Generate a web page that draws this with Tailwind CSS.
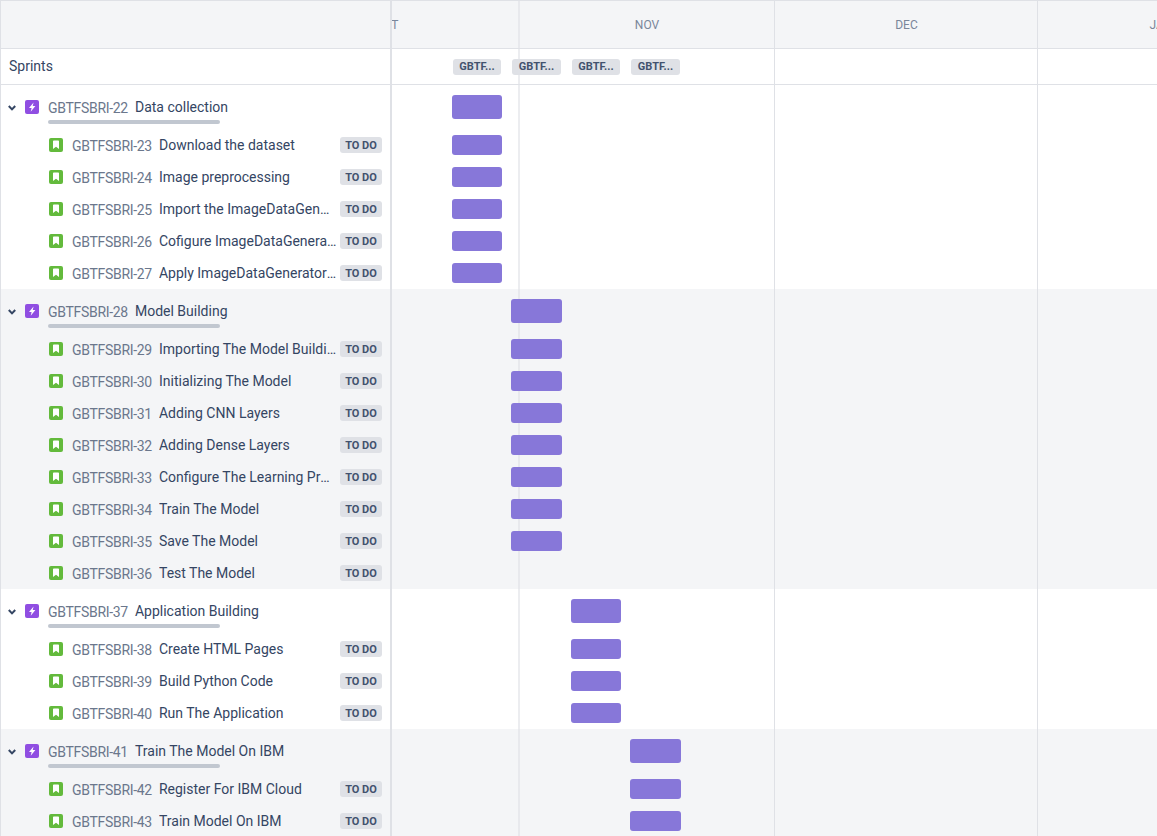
<!DOCTYPE html>
<html><head><meta charset="utf-8"><script src="https://cdn.jsdelivr.net/npm/@tailwindcss/browser@4"></script></head>
<body class="m-0 overflow-hidden bg-white">
<div class="relative h-[836px] w-[1157px] overflow-hidden font-['Roboto',sans-serif] text-[14px] text-[#344563]">

<div class="pointer-events-none absolute left-[518px] top-0 h-full w-[2px] bg-[#dfe1e6]/60"></div>
<div class="pointer-events-none absolute left-[774px] top-0 h-full w-px bg-[#dfe1e6]"></div>
<div class="pointer-events-none absolute left-[1037px] top-0 h-full w-px bg-[#dfe1e6]"></div>

<div class="flex h-[49px] border-y border-l border-[#dfe1e6] bg-[#f4f5f7]">
  <div class="w-[391px] shrink-0 border-r-2 border-[#dfe1e6]"></div>
  <div class="flex flex-1 overflow-hidden text-[12px] uppercase leading-[49px] text-[#7a869a]">
    <div class="ml-[-137px] w-[264px] shrink-0 text-center">Oct</div>
    <div class="w-[256px] shrink-0 text-center">Nov</div>
    <div class="w-[263px] shrink-0 text-center">Dec</div>
    <div class="w-[246px] shrink-0 text-center">Jan</div>
  </div>
</div>

<div class="flex h-[36px] border-b border-l border-[#dfe1e6]">
  <div class="flex w-[391px] shrink-0 items-center border-r-2 border-[#dfe1e6] pl-2">Sprints</div>
  <div class="relative z-10 flex flex-1 items-center gap-[11px] pl-[61px] text-[11px] font-bold text-[#42526e]">
    <span class="flex h-[16px] w-[48px] items-center justify-center rounded-[3px] bg-[#dfe1e6] pt-px">GBTF...</span>
    <span class="flex h-[16px] w-[49px] items-center justify-center rounded-[3px] bg-[#dfe1e6] pt-px">GBTF...</span>
    <span class="flex h-[16px] w-[48px] items-center justify-center rounded-[3px] bg-[#dfe1e6] pt-px">GBTF...</span>
    <span class="flex h-[16px] w-[49px] items-center justify-center rounded-[3px] bg-[#dfe1e6] pt-px">GBTF...</span>
  </div>
</div>

<!-- GROUP 1 -->
<div>
  <div class="flex h-[44px] border-l border-[#dfe1e6]">
    <div class="relative flex w-[391px] shrink-0 items-start border-r-2 border-[#dfe1e6] pt-[15px]">
      <svg class="ml-[7px] mt-[5px] h-[6px] w-[8px]" viewBox="0 0 8 6"><path d="M.8 1 4 4.4 7.2 1" fill="none" stroke="#344563" stroke-width="2"/></svg>
      <svg class="ml-[9px] h-[14px] w-[14px]" viewBox="0 0 14 14"><rect width="14" height="14" rx="2" fill="#904ee2"/><path d="M8.6 2.4 4 8h2.6l-.9 3.8L10.4 6H7.7z" fill="#fff"/></svg>
      <span class="ml-[9px] leading-[16px] tracking-[-0.3px] text-[#6b778c]">GBTFSBRI-22</span>
      <span class="ml-[7px] leading-[14px]">Data collection</span>
      <div class="absolute left-[47px] top-[35px] h-[4px] w-[172px] rounded-sm bg-[#c1c7d0]"></div>
    </div>
    <div class="flex-1 pl-[59.75px] pt-[10px]"><div class="relative z-10 h-[24px] w-[50.6px] rounded-[3px] bg-[#8777d9]"></div></div>
  </div>
  <div class="flex h-[32px] border-l border-[#dfe1e6]"><div class="flex w-[391px] shrink-0 items-center border-r-2 border-[#dfe1e6] pl-[48px]"><svg class="h-[14px] w-[14px] shrink-0" viewBox="0 0 14 14"><rect width="14" height="14" rx="2" fill="#63ba3c"/><path d="M4.8 2.5h4.4a.8.8 0 0 1 .8.8V11L7 8.8 4 11V3.3a.8.8 0 0 1 .8-.8z" fill="#fff"/></svg><span class="ml-[9px] shrink-0 pt-[2px] tracking-[-0.3px] text-[#6b778c]">GBTFSBRI-23</span><span class="ml-[7px] min-w-0 flex-1 truncate">Download the dataset</span><span class="ml-[3.5px] mr-[8px] flex h-[16px] w-[42px] shrink-0 items-center justify-center rounded-[3px] bg-[#dfe1e6] pt-[2px] text-[11px] font-bold text-[#42526e]">TO DO</span></div><div class="flex-1 pl-[59.75px] pt-[6px]"><div class="relative z-10 h-[20px] w-[50.6px] rounded-[3px] bg-[#8777d9]"></div></div></div>
  <div class="flex h-[32px] border-l border-[#dfe1e6]"><div class="flex w-[391px] shrink-0 items-center border-r-2 border-[#dfe1e6] pl-[48px]"><svg class="h-[14px] w-[14px] shrink-0" viewBox="0 0 14 14"><rect width="14" height="14" rx="2" fill="#63ba3c"/><path d="M4.8 2.5h4.4a.8.8 0 0 1 .8.8V11L7 8.8 4 11V3.3a.8.8 0 0 1 .8-.8z" fill="#fff"/></svg><span class="ml-[9px] shrink-0 pt-[2px] tracking-[-0.3px] text-[#6b778c]">GBTFSBRI-24</span><span class="ml-[7px] min-w-0 flex-1 truncate">Image preprocessing</span><span class="ml-[3.5px] mr-[8px] flex h-[16px] w-[42px] shrink-0 items-center justify-center rounded-[3px] bg-[#dfe1e6] pt-[2px] text-[11px] font-bold text-[#42526e]">TO DO</span></div><div class="flex-1 pl-[59.75px] pt-[6px]"><div class="relative z-10 h-[20px] w-[50.6px] rounded-[3px] bg-[#8777d9]"></div></div></div>
  <div class="flex h-[32px] border-l border-[#dfe1e6]"><div class="flex w-[391px] shrink-0 items-center border-r-2 border-[#dfe1e6] pl-[48px]"><svg class="h-[14px] w-[14px] shrink-0" viewBox="0 0 14 14"><rect width="14" height="14" rx="2" fill="#63ba3c"/><path d="M4.8 2.5h4.4a.8.8 0 0 1 .8.8V11L7 8.8 4 11V3.3a.8.8 0 0 1 .8-.8z" fill="#fff"/></svg><span class="ml-[9px] shrink-0 pt-[2px] tracking-[-0.3px] text-[#6b778c]">GBTFSBRI-25</span><span class="ml-[7px] min-w-0 flex-1 truncate">Import the ImageDataGenerator Library</span><span class="ml-[3.5px] mr-[8px] flex h-[16px] w-[42px] shrink-0 items-center justify-center rounded-[3px] bg-[#dfe1e6] pt-[2px] text-[11px] font-bold text-[#42526e]">TO DO</span></div><div class="flex-1 pl-[59.75px] pt-[6px]"><div class="relative z-10 h-[20px] w-[50.6px] rounded-[3px] bg-[#8777d9]"></div></div></div>
  <div class="flex h-[32px] border-l border-[#dfe1e6]"><div class="flex w-[391px] shrink-0 items-center border-r-2 border-[#dfe1e6] pl-[48px]"><svg class="h-[14px] w-[14px] shrink-0" viewBox="0 0 14 14"><rect width="14" height="14" rx="2" fill="#63ba3c"/><path d="M4.8 2.5h4.4a.8.8 0 0 1 .8.8V11L7 8.8 4 11V3.3a.8.8 0 0 1 .8-.8z" fill="#fff"/></svg><span class="ml-[9px] shrink-0 pt-[2px] tracking-[-0.3px] text-[#6b778c]">GBTFSBRI-26</span><span class="ml-[7px] min-w-0 flex-1 truncate">Cofigure ImageDataGenerator Class</span><span class="ml-[3.5px] mr-[8px] flex h-[16px] w-[42px] shrink-0 items-center justify-center rounded-[3px] bg-[#dfe1e6] pt-[2px] text-[11px] font-bold text-[#42526e]">TO DO</span></div><div class="flex-1 pl-[59.75px] pt-[6px]"><div class="relative z-10 h-[20px] w-[50.6px] rounded-[3px] bg-[#8777d9]"></div></div></div>
  <div class="flex h-[32px] border-l border-[#dfe1e6]"><div class="flex w-[391px] shrink-0 items-center border-r-2 border-[#dfe1e6] pl-[48px]"><svg class="h-[14px] w-[14px] shrink-0" viewBox="0 0 14 14"><rect width="14" height="14" rx="2" fill="#63ba3c"/><path d="M4.8 2.5h4.4a.8.8 0 0 1 .8.8V11L7 8.8 4 11V3.3a.8.8 0 0 1 .8-.8z" fill="#fff"/></svg><span class="ml-[9px] shrink-0 pt-[2px] tracking-[-0.3px] text-[#6b778c]">GBTFSBRI-27</span><span class="ml-[7px] min-w-0 flex-1 truncate">Apply ImageDataGenerator Functionality</span><span class="ml-[3.5px] mr-[8px] flex h-[16px] w-[42px] shrink-0 items-center justify-center rounded-[3px] bg-[#dfe1e6] pt-[2px] text-[11px] font-bold text-[#42526e]">TO DO</span></div><div class="flex-1 pl-[59.75px] pt-[6px]"><div class="relative z-10 h-[20px] w-[50.6px] rounded-[3px] bg-[#8777d9]"></div></div></div>
</div>

<!-- GROUP 2 -->
<div class="bg-[#f4f5f7]">
  <div class="flex h-[44px] border-l border-[#dfe1e6]">
    <div class="relative flex w-[391px] shrink-0 items-start border-r-2 border-[#dfe1e6] pt-[15px]">
      <svg class="ml-[7px] mt-[5px] h-[6px] w-[8px]" viewBox="0 0 8 6"><path d="M.8 1 4 4.4 7.2 1" fill="none" stroke="#344563" stroke-width="2"/></svg>
      <svg class="ml-[9px] h-[14px] w-[14px]" viewBox="0 0 14 14"><rect width="14" height="14" rx="2" fill="#904ee2"/><path d="M8.6 2.4 4 8h2.6l-.9 3.8L10.4 6H7.7z" fill="#fff"/></svg>
      <span class="ml-[9px] leading-[16px] tracking-[-0.3px] text-[#6b778c]">GBTFSBRI-28</span>
      <span class="ml-[7px] leading-[14px]">Model Building</span>
      <div class="absolute left-[47px] top-[35px] h-[4px] w-[172px] rounded-sm bg-[#c1c7d0]"></div>
    </div>
    <div class="flex-1 pl-[119.25px] pt-[10px]"><div class="relative z-10 h-[24px] w-[50.6px] rounded-[3px] bg-[#8777d9]"></div></div>
  </div>
  <div class="flex h-[32px] border-l border-[#dfe1e6]"><div class="flex w-[391px] shrink-0 items-center border-r-2 border-[#dfe1e6] pl-[48px]"><svg class="h-[14px] w-[14px] shrink-0" viewBox="0 0 14 14"><rect width="14" height="14" rx="2" fill="#63ba3c"/><path d="M4.8 2.5h4.4a.8.8 0 0 1 .8.8V11L7 8.8 4 11V3.3a.8.8 0 0 1 .8-.8z" fill="#fff"/></svg><span class="ml-[9px] shrink-0 pt-[2px] tracking-[-0.3px] text-[#6b778c]">GBTFSBRI-29</span><span class="ml-[7px] min-w-0 flex-1 truncate">Importing The Model Building Libraries</span><span class="ml-[3.5px] mr-[8px] flex h-[16px] w-[42px] shrink-0 items-center justify-center rounded-[3px] bg-[#dfe1e6] pt-[2px] text-[11px] font-bold text-[#42526e]">TO DO</span></div><div class="flex-1 pl-[119.25px] pt-[6px]"><div class="relative z-10 h-[20px] w-[50.6px] rounded-[3px] bg-[#8777d9]"></div></div></div>
  <div class="flex h-[32px] border-l border-[#dfe1e6]"><div class="flex w-[391px] shrink-0 items-center border-r-2 border-[#dfe1e6] pl-[48px]"><svg class="h-[14px] w-[14px] shrink-0" viewBox="0 0 14 14"><rect width="14" height="14" rx="2" fill="#63ba3c"/><path d="M4.8 2.5h4.4a.8.8 0 0 1 .8.8V11L7 8.8 4 11V3.3a.8.8 0 0 1 .8-.8z" fill="#fff"/></svg><span class="ml-[9px] shrink-0 pt-[2px] tracking-[-0.3px] text-[#6b778c]">GBTFSBRI-30</span><span class="ml-[7px] min-w-0 flex-1 truncate">Initializing The Model</span><span class="ml-[3.5px] mr-[8px] flex h-[16px] w-[42px] shrink-0 items-center justify-center rounded-[3px] bg-[#dfe1e6] pt-[2px] text-[11px] font-bold text-[#42526e]">TO DO</span></div><div class="flex-1 pl-[119.25px] pt-[6px]"><div class="relative z-10 h-[20px] w-[50.6px] rounded-[3px] bg-[#8777d9]"></div></div></div>
  <div class="flex h-[32px] border-l border-[#dfe1e6]"><div class="flex w-[391px] shrink-0 items-center border-r-2 border-[#dfe1e6] pl-[48px]"><svg class="h-[14px] w-[14px] shrink-0" viewBox="0 0 14 14"><rect width="14" height="14" rx="2" fill="#63ba3c"/><path d="M4.8 2.5h4.4a.8.8 0 0 1 .8.8V11L7 8.8 4 11V3.3a.8.8 0 0 1 .8-.8z" fill="#fff"/></svg><span class="ml-[9px] shrink-0 pt-[2px] tracking-[-0.3px] text-[#6b778c]">GBTFSBRI-31</span><span class="ml-[7px] min-w-0 flex-1 truncate">Adding CNN Layers</span><span class="ml-[3.5px] mr-[8px] flex h-[16px] w-[42px] shrink-0 items-center justify-center rounded-[3px] bg-[#dfe1e6] pt-[2px] text-[11px] font-bold text-[#42526e]">TO DO</span></div><div class="flex-1 pl-[119.25px] pt-[6px]"><div class="relative z-10 h-[20px] w-[50.6px] rounded-[3px] bg-[#8777d9]"></div></div></div>
  <div class="flex h-[32px] border-l border-[#dfe1e6]"><div class="flex w-[391px] shrink-0 items-center border-r-2 border-[#dfe1e6] pl-[48px]"><svg class="h-[14px] w-[14px] shrink-0" viewBox="0 0 14 14"><rect width="14" height="14" rx="2" fill="#63ba3c"/><path d="M4.8 2.5h4.4a.8.8 0 0 1 .8.8V11L7 8.8 4 11V3.3a.8.8 0 0 1 .8-.8z" fill="#fff"/></svg><span class="ml-[9px] shrink-0 pt-[2px] tracking-[-0.3px] text-[#6b778c]">GBTFSBRI-32</span><span class="ml-[7px] min-w-0 flex-1 truncate">Adding Dense Layers</span><span class="ml-[3.5px] mr-[8px] flex h-[16px] w-[42px] shrink-0 items-center justify-center rounded-[3px] bg-[#dfe1e6] pt-[2px] text-[11px] font-bold text-[#42526e]">TO DO</span></div><div class="flex-1 pl-[119.25px] pt-[6px]"><div class="relative z-10 h-[20px] w-[50.6px] rounded-[3px] bg-[#8777d9]"></div></div></div>
  <div class="flex h-[32px] border-l border-[#dfe1e6]"><div class="flex w-[391px] shrink-0 items-center border-r-2 border-[#dfe1e6] pl-[48px]"><svg class="h-[14px] w-[14px] shrink-0" viewBox="0 0 14 14"><rect width="14" height="14" rx="2" fill="#63ba3c"/><path d="M4.8 2.5h4.4a.8.8 0 0 1 .8.8V11L7 8.8 4 11V3.3a.8.8 0 0 1 .8-.8z" fill="#fff"/></svg><span class="ml-[9px] shrink-0 pt-[2px] tracking-[-0.3px] text-[#6b778c]">GBTFSBRI-33</span><span class="ml-[7px] min-w-0 flex-1 truncate">Configure The Learning Process</span><span class="ml-[3.5px] mr-[8px] flex h-[16px] w-[42px] shrink-0 items-center justify-center rounded-[3px] bg-[#dfe1e6] pt-[2px] text-[11px] font-bold text-[#42526e]">TO DO</span></div><div class="flex-1 pl-[119.25px] pt-[6px]"><div class="relative z-10 h-[20px] w-[50.6px] rounded-[3px] bg-[#8777d9]"></div></div></div>
  <div class="flex h-[32px] border-l border-[#dfe1e6]"><div class="flex w-[391px] shrink-0 items-center border-r-2 border-[#dfe1e6] pl-[48px]"><svg class="h-[14px] w-[14px] shrink-0" viewBox="0 0 14 14"><rect width="14" height="14" rx="2" fill="#63ba3c"/><path d="M4.8 2.5h4.4a.8.8 0 0 1 .8.8V11L7 8.8 4 11V3.3a.8.8 0 0 1 .8-.8z" fill="#fff"/></svg><span class="ml-[9px] shrink-0 pt-[2px] tracking-[-0.3px] text-[#6b778c]">GBTFSBRI-34</span><span class="ml-[7px] min-w-0 flex-1 truncate">Train The Model</span><span class="ml-[3.5px] mr-[8px] flex h-[16px] w-[42px] shrink-0 items-center justify-center rounded-[3px] bg-[#dfe1e6] pt-[2px] text-[11px] font-bold text-[#42526e]">TO DO</span></div><div class="flex-1 pl-[119.25px] pt-[6px]"><div class="relative z-10 h-[20px] w-[50.6px] rounded-[3px] bg-[#8777d9]"></div></div></div>
  <div class="flex h-[32px] border-l border-[#dfe1e6]"><div class="flex w-[391px] shrink-0 items-center border-r-2 border-[#dfe1e6] pl-[48px]"><svg class="h-[14px] w-[14px] shrink-0" viewBox="0 0 14 14"><rect width="14" height="14" rx="2" fill="#63ba3c"/><path d="M4.8 2.5h4.4a.8.8 0 0 1 .8.8V11L7 8.8 4 11V3.3a.8.8 0 0 1 .8-.8z" fill="#fff"/></svg><span class="ml-[9px] shrink-0 pt-[2px] tracking-[-0.3px] text-[#6b778c]">GBTFSBRI-35</span><span class="ml-[7px] min-w-0 flex-1 truncate">Save The Model</span><span class="ml-[3.5px] mr-[8px] flex h-[16px] w-[42px] shrink-0 items-center justify-center rounded-[3px] bg-[#dfe1e6] pt-[2px] text-[11px] font-bold text-[#42526e]">TO DO</span></div><div class="flex-1 pl-[119.25px] pt-[6px]"><div class="relative z-10 h-[20px] w-[50.6px] rounded-[3px] bg-[#8777d9]"></div></div></div>
  <div class="flex h-[32px] border-l border-[#dfe1e6]"><div class="flex w-[391px] shrink-0 items-center border-r-2 border-[#dfe1e6] pl-[48px]"><svg class="h-[14px] w-[14px] shrink-0" viewBox="0 0 14 14"><rect width="14" height="14" rx="2" fill="#63ba3c"/><path d="M4.8 2.5h4.4a.8.8 0 0 1 .8.8V11L7 8.8 4 11V3.3a.8.8 0 0 1 .8-.8z" fill="#fff"/></svg><span class="ml-[9px] shrink-0 pt-[2px] tracking-[-0.3px] text-[#6b778c]">GBTFSBRI-36</span><span class="ml-[7px] min-w-0 flex-1 truncate">Test The Model</span><span class="ml-[3.5px] mr-[8px] flex h-[16px] w-[42px] shrink-0 items-center justify-center rounded-[3px] bg-[#dfe1e6] pt-[2px] text-[11px] font-bold text-[#42526e]">TO DO</span></div><div class="flex-1"></div></div>
</div>

<!-- GROUP 3 -->
<div>
  <div class="flex h-[44px] border-l border-[#dfe1e6]">
    <div class="relative flex w-[391px] shrink-0 items-start border-r-2 border-[#dfe1e6] pt-[15px]">
      <svg class="ml-[7px] mt-[5px] h-[6px] w-[8px]" viewBox="0 0 8 6"><path d="M.8 1 4 4.4 7.2 1" fill="none" stroke="#344563" stroke-width="2"/></svg>
      <svg class="ml-[9px] h-[14px] w-[14px]" viewBox="0 0 14 14"><rect width="14" height="14" rx="2" fill="#904ee2"/><path d="M8.6 2.4 4 8h2.6l-.9 3.8L10.4 6H7.7z" fill="#fff"/></svg>
      <span class="ml-[9px] leading-[16px] tracking-[-0.3px] text-[#6b778c]">GBTFSBRI-37</span>
      <span class="ml-[7px] leading-[14px]">Application Building</span>
      <div class="absolute left-[47px] top-[35px] h-[4px] w-[172px] rounded-sm bg-[#c1c7d0]"></div>
    </div>
    <div class="flex-1 pl-[178.75px] pt-[10px]"><div class="relative z-10 h-[24px] w-[50.6px] rounded-[3px] bg-[#8777d9]"></div></div>
  </div>
  <div class="flex h-[32px] border-l border-[#dfe1e6]"><div class="flex w-[391px] shrink-0 items-center border-r-2 border-[#dfe1e6] pl-[48px]"><svg class="h-[14px] w-[14px] shrink-0" viewBox="0 0 14 14"><rect width="14" height="14" rx="2" fill="#63ba3c"/><path d="M4.8 2.5h4.4a.8.8 0 0 1 .8.8V11L7 8.8 4 11V3.3a.8.8 0 0 1 .8-.8z" fill="#fff"/></svg><span class="ml-[9px] shrink-0 pt-[2px] tracking-[-0.3px] text-[#6b778c]">GBTFSBRI-38</span><span class="ml-[7px] min-w-0 flex-1 truncate">Create HTML Pages</span><span class="ml-[3.5px] mr-[8px] flex h-[16px] w-[42px] shrink-0 items-center justify-center rounded-[3px] bg-[#dfe1e6] pt-[2px] text-[11px] font-bold text-[#42526e]">TO DO</span></div><div class="flex-1 pl-[178.75px] pt-[6px]"><div class="relative z-10 h-[20px] w-[50.6px] rounded-[3px] bg-[#8777d9]"></div></div></div>
  <div class="flex h-[32px] border-l border-[#dfe1e6]"><div class="flex w-[391px] shrink-0 items-center border-r-2 border-[#dfe1e6] pl-[48px]"><svg class="h-[14px] w-[14px] shrink-0" viewBox="0 0 14 14"><rect width="14" height="14" rx="2" fill="#63ba3c"/><path d="M4.8 2.5h4.4a.8.8 0 0 1 .8.8V11L7 8.8 4 11V3.3a.8.8 0 0 1 .8-.8z" fill="#fff"/></svg><span class="ml-[9px] shrink-0 pt-[2px] tracking-[-0.3px] text-[#6b778c]">GBTFSBRI-39</span><span class="ml-[7px] min-w-0 flex-1 truncate">Build Python Code</span><span class="ml-[3.5px] mr-[8px] flex h-[16px] w-[42px] shrink-0 items-center justify-center rounded-[3px] bg-[#dfe1e6] pt-[2px] text-[11px] font-bold text-[#42526e]">TO DO</span></div><div class="flex-1 pl-[178.75px] pt-[6px]"><div class="relative z-10 h-[20px] w-[50.6px] rounded-[3px] bg-[#8777d9]"></div></div></div>
  <div class="flex h-[32px] border-l border-[#dfe1e6]"><div class="flex w-[391px] shrink-0 items-center border-r-2 border-[#dfe1e6] pl-[48px]"><svg class="h-[14px] w-[14px] shrink-0" viewBox="0 0 14 14"><rect width="14" height="14" rx="2" fill="#63ba3c"/><path d="M4.8 2.5h4.4a.8.8 0 0 1 .8.8V11L7 8.8 4 11V3.3a.8.8 0 0 1 .8-.8z" fill="#fff"/></svg><span class="ml-[9px] shrink-0 pt-[2px] tracking-[-0.3px] text-[#6b778c]">GBTFSBRI-40</span><span class="ml-[7px] min-w-0 flex-1 truncate">Run The Application</span><span class="ml-[3.5px] mr-[8px] flex h-[16px] w-[42px] shrink-0 items-center justify-center rounded-[3px] bg-[#dfe1e6] pt-[2px] text-[11px] font-bold text-[#42526e]">TO DO</span></div><div class="flex-1 pl-[178.75px] pt-[6px]"><div class="relative z-10 h-[20px] w-[50.6px] rounded-[3px] bg-[#8777d9]"></div></div></div>
</div>

<!-- GROUP 4 -->
<div class="bg-[#f4f5f7]">
  <div class="flex h-[44px] border-l border-[#dfe1e6]">
    <div class="relative flex w-[391px] shrink-0 items-start border-r-2 border-[#dfe1e6] pt-[15px]">
      <svg class="ml-[7px] mt-[5px] h-[6px] w-[8px]" viewBox="0 0 8 6"><path d="M.8 1 4 4.4 7.2 1" fill="none" stroke="#344563" stroke-width="2"/></svg>
      <svg class="ml-[9px] h-[14px] w-[14px]" viewBox="0 0 14 14"><rect width="14" height="14" rx="2" fill="#904ee2"/><path d="M8.6 2.4 4 8h2.6l-.9 3.8L10.4 6H7.7z" fill="#fff"/></svg>
      <span class="ml-[9px] leading-[16px] tracking-[-0.3px] text-[#6b778c]">GBTFSBRI-41</span>
      <span class="ml-[7px] leading-[14px]">Train The Model On IBM</span>
      <div class="absolute left-[47px] top-[35px] h-[4px] w-[172px] rounded-sm bg-[#c1c7d0]"></div>
    </div>
    <div class="flex-1 pl-[238.25px] pt-[10px]"><div class="relative z-10 h-[24px] w-[50.6px] rounded-[3px] bg-[#8777d9]"></div></div>
  </div>
  <div class="flex h-[32px] border-l border-[#dfe1e6]"><div class="flex w-[391px] shrink-0 items-center border-r-2 border-[#dfe1e6] pl-[48px]"><svg class="h-[14px] w-[14px] shrink-0" viewBox="0 0 14 14"><rect width="14" height="14" rx="2" fill="#63ba3c"/><path d="M4.8 2.5h4.4a.8.8 0 0 1 .8.8V11L7 8.8 4 11V3.3a.8.8 0 0 1 .8-.8z" fill="#fff"/></svg><span class="ml-[9px] shrink-0 pt-[2px] tracking-[-0.3px] text-[#6b778c]">GBTFSBRI-42</span><span class="ml-[7px] min-w-0 flex-1 truncate">Register For IBM Cloud</span><span class="ml-[3.5px] mr-[8px] flex h-[16px] w-[42px] shrink-0 items-center justify-center rounded-[3px] bg-[#dfe1e6] pt-[2px] text-[11px] font-bold text-[#42526e]">TO DO</span></div><div class="flex-1 pl-[238.25px] pt-[6px]"><div class="relative z-10 h-[20px] w-[50.6px] rounded-[3px] bg-[#8777d9]"></div></div></div>
  <div class="flex h-[32px] border-l border-[#dfe1e6]"><div class="flex w-[391px] shrink-0 items-center border-r-2 border-[#dfe1e6] pl-[48px]"><svg class="h-[14px] w-[14px] shrink-0" viewBox="0 0 14 14"><rect width="14" height="14" rx="2" fill="#63ba3c"/><path d="M4.8 2.5h4.4a.8.8 0 0 1 .8.8V11L7 8.8 4 11V3.3a.8.8 0 0 1 .8-.8z" fill="#fff"/></svg><span class="ml-[9px] shrink-0 pt-[2px] tracking-[-0.3px] text-[#6b778c]">GBTFSBRI-43</span><span class="ml-[7px] min-w-0 flex-1 truncate">Train Model On IBM</span><span class="ml-[3.5px] mr-[8px] flex h-[16px] w-[42px] shrink-0 items-center justify-center rounded-[3px] bg-[#dfe1e6] pt-[2px] text-[11px] font-bold text-[#42526e]">TO DO</span></div><div class="flex-1 pl-[238.25px] pt-[6px]"><div class="relative z-10 h-[20px] w-[50.6px] rounded-[3px] bg-[#8777d9]"></div></div></div>
</div>

</div>
</body></html>
